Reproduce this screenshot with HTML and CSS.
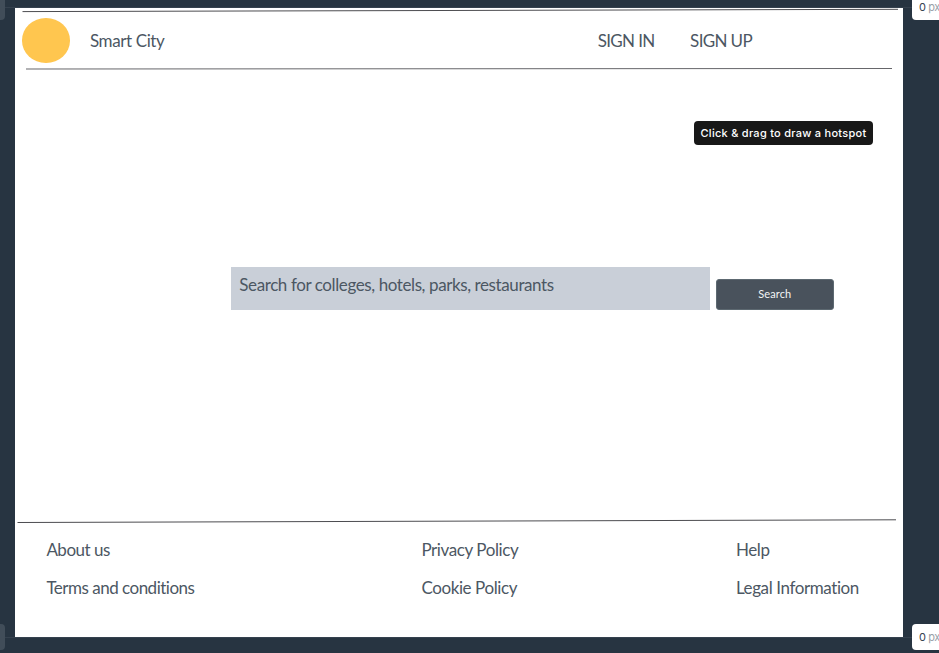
FILE: index.html
```html
<!DOCTYPE html>
<html lang="en">
<head>
<meta charset="utf-8">
<title>Smart City</title>
<link rel="stylesheet" href="styles.css">
</head>
<body>
<div class="guide guide-top"></div>
<div class="guide guide-bottom"></div>
<main class="board">
  <svg class="rule rule-top" width="888" height="8"><line x1="7.5" y1="3.6" x2="883" y2="1.3"/></svg>
  <header class="header">
    <div class="logo"></div>
    <span class="brand">Smart City</span>
    <nav class="nav"><a>SIGN IN</a><a>SIGN UP</a></nav>
  </header>
  <svg class="rule rule-soft" width="888" height="4"><line x1="11" y1="2" x2="877" y2="1.5"/></svg>
  <section class="search">
    <div class="field">Search for colleges, hotels, parks, restaurants</div>
    <button class="button">Search</button>
  </section>
  <svg class="rule" width="888" height="6"><line x1="2.5" y1="4.5" x2="881" y2="1.8"/></svg>
  <footer class="footer">
    <a class="tight">About us</a><a>Privacy Policy</a><a>Help</a>
    <a class="tight">Terms and conditions</a><a>Cookie Policy</a><a>Legal Information</a>
  </footer>
</main>
<div class="tooltip">Click &amp; drag to draw a hotspot</div>
<div class="tab tab-top"></div>
<div class="tab tab-bottom"></div>
<div class="measure measure-top"><b>0</b> px</div>
<div class="measure measure-bottom"><b>0</b> px</div>
</body>
</html>
```

FILE: styles.css
```css
* { box-sizing: border-box; }
body {
  margin: 0;
  height: 653px;
  padding: 8px 36px 16px 15px;
  overflow: hidden;
  position: relative;
  background: #273441;
  color: #4c5763;
  font: 17px/22px Lato, "Liberation Sans", sans-serif;
  letter-spacing: -0.4px;
}
.board {
  position: relative;
  display: flex;
  flex-direction: column;
  width: 888px;
  height: 629px;
  background: #fff;
}
.rule { display: block; flex: none; }
.rule line { stroke: #4c4c50; stroke-width: 1; }
.rule-soft line { stroke: #66666a; }
.header {
  display: flex;
  align-items: center;
  height: 51px;
  padding: 0 151px 3px 7.4px;
}
.logo {
  width: 47.6px;
  height: 44.5px;
  margin-top: 1px;
  border-radius: 50%;
  background: #ffc64f;
}
.brand { margin: 2px 0 0 20px; }
.nav {
  display: flex;
  gap: 35.5px;
  margin: 2px 0 0 auto;
  letter-spacing: -0.65px;
}
.search {
  display: flex;
  align-items: flex-end;
  gap: 6px;
  height: 239px;
  margin-bottom: 208px;
  padding-left: 216px;
}
.field {
  width: 478.5px;
  height: 43px;
  padding: 7px 8.3px;
  background: #c9cfd8;
}
.button {
  width: 118.5px;
  height: 31px;
  padding: 0 0 2px;
  border: 1px solid #5d6971;
  border-radius: 3px;
  background: #49525c;
  color: #f4f5f6;
  font: 11px/14px Lato, sans-serif;
  letter-spacing: 0.1px;
}
.footer {
  display: grid;
  grid-template-columns: 375px 314.5px 1fr;
  grid-auto-rows: 22px;
  row-gap: 16px;
  padding: 15px 0 0 31.4px;
}
.tight { letter-spacing: -0.5px; }
.guide {
  position: absolute;
  left: 0;
  width: 939px;
  height: 1px;
  background: #35414e;
}
.guide-top { top: 7px; }
.guide-bottom { top: 637px; }
.tooltip {
  position: absolute;
  left: 694px;
  top: 121px;
  width: 179px;
  height: 24px;
  border-radius: 4px;
  background: #181818;
  color: #fff;
  font: 500 11px/24px Inter, sans-serif;
  letter-spacing: 0.27px;
  text-align: center;
  white-space: nowrap;
}
.tab {
  position: absolute;
  left: -10px;
  width: 15px;
  height: 26px;
  border-radius: 4px;
  background: #414d59;
}
.tab-top { top: -6px; }
.tab-bottom { top: 624px; }
.measure {
  position: absolute;
  left: 912px;
  width: 40px;
  height: 26px;
  padding-left: 7px;
  border-radius: 4px;
  background: #fff;
  color: #9a9fa8;
  font: 11px/27px Inter, sans-serif;
  letter-spacing: -0.4px;
  white-space: nowrap;
}
.measure b { color: #364150; font-weight: 400; }
.measure-top { top: -6px; }
.measure-bottom { top: 624px; }
```
